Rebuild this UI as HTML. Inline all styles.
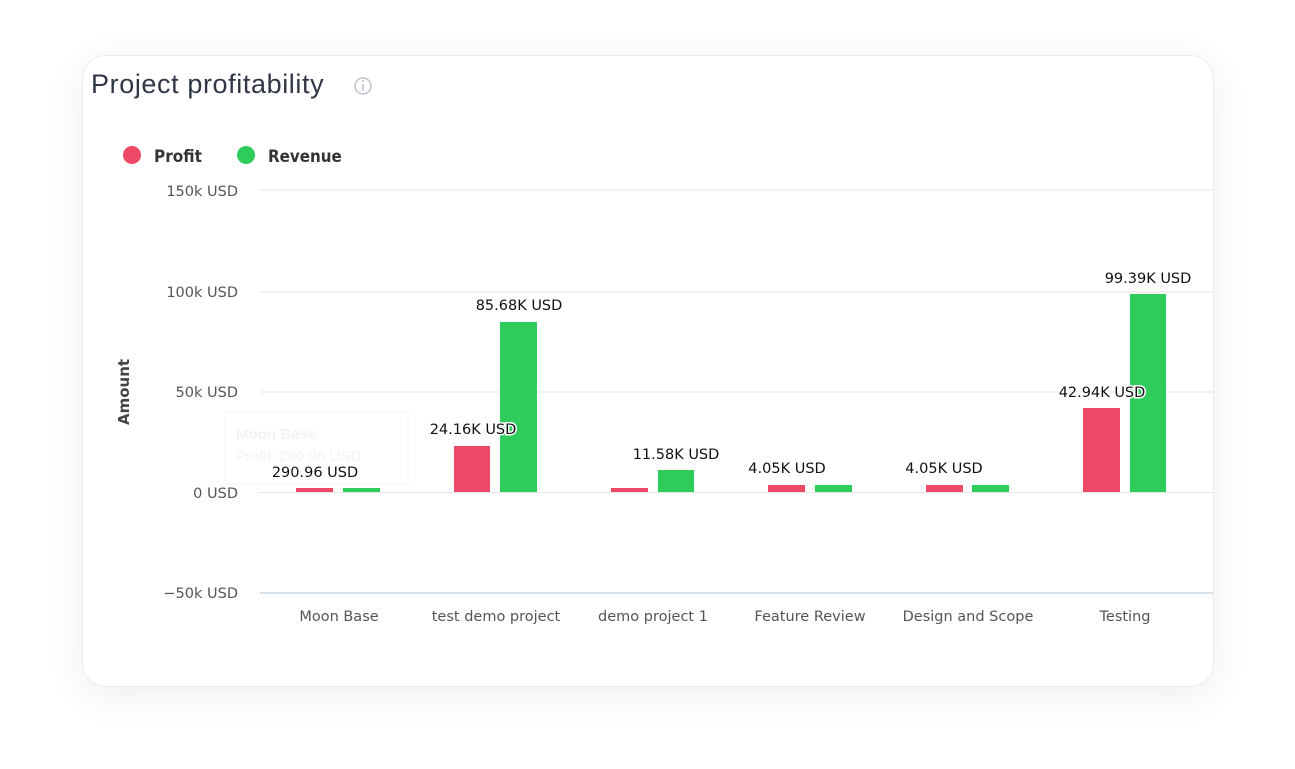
<!DOCTYPE html>
<html><head><meta charset="utf-8"><style>
html,body{margin:0;padding:0;background:#fff;width:1295px;height:769px;overflow:hidden}
.card{position:absolute;left:82px;top:55px;width:1130px;height:630px;border-radius:24px;background:#fff;border:1px solid #ececec;box-shadow:0 8px 40px rgba(0,0,0,0.07)}
svg{position:absolute;left:0;top:0}
</style></head><body>
<div class="card"></div>
<svg width="1295" height="769" font-family="'Liberation Sans', 'DejaVu Sans', sans-serif">
<text x="91" y="93" font-size="27" fill="#2f3645" letter-spacing="0.6">Project profitability</text>
<circle cx="363" cy="86" r="8" fill="none" stroke="#bcc2cc" stroke-width="1.5"/>
<line x1="363" y1="84" x2="363" y2="91" stroke="#bcc2cc" stroke-width="1.6"/>
<circle cx="363" cy="81" r="1" fill="#bcc2cc"/>
<circle cx="132" cy="155" r="9" fill="#ee4966"/>
<text x="154" y="162" font-size="17" font-weight="bold" fill="#333" font-family="'DejaVu Sans', sans-serif" transform="scale(0.9,1)" transform-origin="154 162">Profit</text>
<circle cx="246" cy="155" r="9" fill="#2ecc5b"/>
<text x="268" y="162" font-size="17" font-weight="bold" fill="#333" font-family="'DejaVu Sans', sans-serif" transform="scale(0.89,1)" transform-origin="268 162">Revenue</text>
<g stroke="#e6e6e6" stroke-width="1">
<line x1="260" y1="190" x2="1213" y2="190"/><line x1="260" y1="292" x2="1213" y2="292"/>
<line x1="260" y1="392" x2="1213" y2="392"/><line x1="260" y1="492.5" x2="1213" y2="492.5"/>
</g>
<line x1="260" y1="593" x2="1213" y2="593" stroke="#ccd6e6" stroke-width="1.5"/>
<g font-size="14.5" fill="#555" text-anchor="end" font-family="'DejaVu Sans', sans-serif">
<text x="238" y="196">150k USD</text><text x="238" y="297">100k USD</text><text x="238" y="397">50k USD</text><text x="238" y="498">0 USD</text><text x="238" y="598">−50k USD</text>
</g>
<text transform="translate(129,392) rotate(-90)" text-anchor="middle" font-size="15" font-weight="bold" fill="#444" font-family="'DejaVu Sans', sans-serif">Amount</text>
<rect x="225" y="412" width="183" height="72" fill="none" stroke="#f4f4f4"/>
<text x="236" y="439" font-size="15" font-weight="bold" fill="#f3f3f3">Moon Base</text>
<text x="236" y="461" font-size="15" fill="#f3f3f3">Profit: 290.96 USD</text>
<g fill="#ee4966">
<rect x="296" y="488" width="37" height="4"/><rect x="454" y="446" width="36" height="46"/><rect x="611" y="488" width="37" height="4"/>
<rect x="768" y="485" width="37" height="7"/><rect x="926" y="485" width="37" height="7"/><rect x="1083" y="408" width="37" height="84"/>
</g>
<g fill="#2ecc5b">
<rect x="343" y="488" width="37" height="4"/><rect x="500" y="322" width="37" height="170"/><rect x="658" y="470" width="36" height="22"/>
<rect x="815" y="485" width="37" height="7"/><rect x="972" y="485" width="37" height="7"/><rect x="1130" y="294" width="36" height="198"/>
</g>
<g font-size="14.5" fill="#111" text-anchor="middle" font-family="'DejaVu Sans', sans-serif" stroke="#fff" stroke-width="3" paint-order="stroke">
<text x="315" y="477">290.96 USD</text><text x="473" y="434">24.16K USD</text><text x="519" y="310">85.68K USD</text>
<text x="676" y="459">11.58K USD</text><text x="787" y="473">4.05K USD</text><text x="944" y="473">4.05K USD</text>
<text x="1102" y="397">42.94K USD</text><text x="1148" y="283">99.39K USD</text>
</g>
<g font-size="14.5" fill="#555" text-anchor="middle" font-family="'DejaVu Sans', sans-serif">
<text x="339" y="621">Moon Base</text><text x="496" y="621">test demo project</text><text x="653" y="621">demo project 1</text>
<text x="810" y="621">Feature Review</text><text x="968" y="621">Design and Scope</text><text x="1125" y="621">Testing</text>
</g>
</svg>
</body></html>
